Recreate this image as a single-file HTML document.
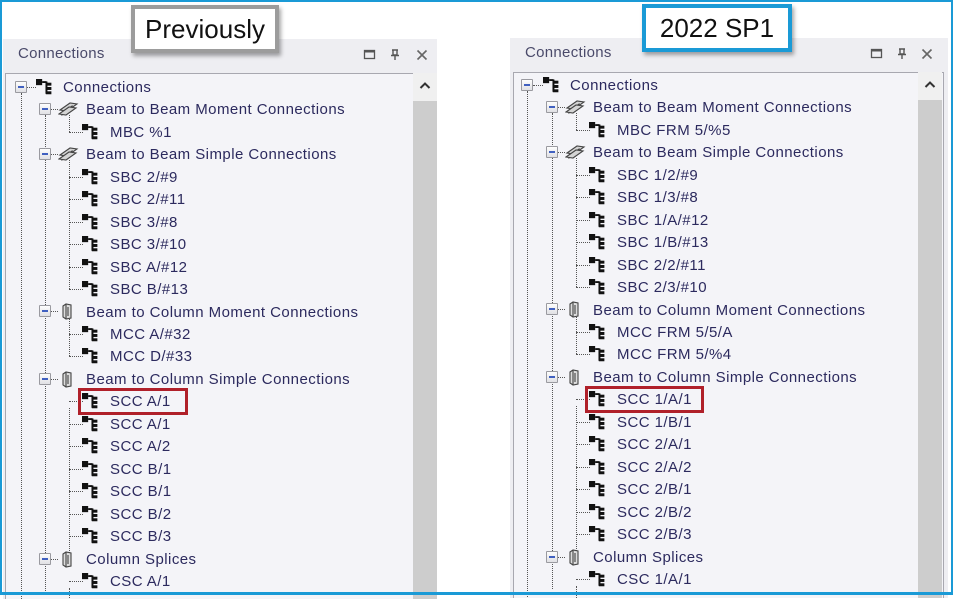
<!DOCTYPE html>
<html><head><meta charset="utf-8"><style>
*{margin:0;padding:0;box-sizing:border-box}
body{width:953px;height:595px;overflow:hidden;background:#fff;position:relative;font-family:"Segoe UI","Liberation Sans",sans-serif}
.frame{position:absolute;left:0;top:0;width:953px;height:595px;border:2px solid #1a9ad6;border-bottom-width:3px;z-index:5;pointer-events:none}
.panel{position:absolute;height:560px;background:#eeeef2;overflow:hidden}
.title{position:absolute;left:15px;top:6px;font-size:15px;letter-spacing:0.3px;color:#4a4a6a}
.hicon{position:absolute;top:10px}
.tree{position:absolute;left:2px;top:34px;bottom:0;border:1px solid #a8a8b0;border-bottom:none;background:#f4f4f8}
.sb{position:absolute;top:34px;bottom:0;width:24px;background:#f0f0f0}
.sb .tr{position:absolute;top:28px;left:0;right:0;bottom:0;background:#cdcdcd}
.row{position:absolute;height:22px;line-height:22px;font-size:15px;letter-spacing:0.45px;color:#2c2a5e;white-space:nowrap;margin-top:1px}
.exp{position:absolute;width:12px;height:12px;border:1px solid #9a9aa0;background:linear-gradient(#fdfdfd,#e0e0e4);border-radius:1px}
.exp:after{content:"";position:absolute;left:2px;top:4px;width:6px;height:1.5px;background:#4060c0}
.vl{position:absolute;width:0;border-left:1px dotted #555}
.hl{position:absolute;height:0;border-top:1px dotted #555}
.ic{position:absolute}
.lab{position:absolute;background:#fff;font-family:"Liberation Sans",sans-serif;font-size:26px;color:#111;text-align:center;line-height:40px;box-shadow:2px 3px 4px rgba(0,0,0,.35);z-index:4}
.red{position:absolute;border:3px solid #b0202a;z-index:3}
</style></head><body>
<svg width="0" height="0" style="position:absolute">
<defs>
<g id="node"><rect x="0" y="0" width="5" height="5" fill="#111"/><path d="M5 2.5H8.5M8.5 2V12" stroke="#111" stroke-width="1.6" fill="none"/><rect x="8" y="3" width="4.5" height="2.4" fill="#111"/><rect x="8" y="6.5" width="4.5" height="2.4" fill="#111"/><rect x="8" y="10" width="4.5" height="2.4" fill="#111"/></g>
<g id="beam" fill="#d4d4d4" stroke="#444" stroke-width="1.1"><path d="M2 9L12 2L19 3L9 10Z"/><path d="M4 12L14 5L14 7L4 14Z"/><path d="M1 13L11 6L18 7L8 14Z"/></g>
<g id="col" fill="#dcdcdc" stroke="#444" stroke-width="1.1"><path d="M2 3L5 1L10 2L10 15L5 16L2 14Z"/><path d="M5 1L5 16"/><path d="M7 4L7 13"/></g>
</defs></svg>
<div class="frame"></div>
<div class="lab" style="left:131px;top:5px;width:148px;height:48px;border:4px solid #9c9c9c;">Previously</div>
<div class="lab" style="left:642px;top:4px;width:150px;height:48px;border:4px solid #1a9ad6;">2022 SP1</div>
<div class="red" style="left:78px;top:388px;width:110px;height:27px"></div>
<div class="red" style="left:585px;top:386px;width:119px;height:27px"></div>

<!-- LEFT PANEL -->
<div class="panel" style="left:3px;top:39px;width:434px">
<div class="title">Connections</div>
<svg class="hicon" style="left:360px" width="14" height="12"><rect x="1.5" y="1.5" width="10" height="8" fill="none" stroke="#555" stroke-width="1.3"/><rect x="1.5" y="1.5" width="10" height="2" fill="#555"/></svg>
<svg class="hicon" style="left:386px" width="12" height="12"><path d="M3 1H9M4 1V6H8V1M2 6.5H10M6 6.5V11" stroke="#555" stroke-width="1.4" fill="none"/></svg>
<svg class="hicon" style="left:413px" width="12" height="12"><path d="M1.5 1.5L10.5 10.5M10.5 1.5L1.5 10.5" stroke="#666" stroke-width="1.6"/></svg>
<div class="tree" style="right:0">
</div>
<div class="sb" style="left:410px"><svg style="position:absolute;left:6px;top:8px" width="12" height="10"><path d="M1.5 7L6 2.5L10.5 7" stroke="#333" stroke-width="2" fill="none"/></svg><div class="tr"></div></div>
<div class="vl" style="left:18px;top:54px;height:520px"></div>
<div class="vl" style="left:42px;top:76px;height:476px"></div>
<div class="vl" style="left:66px;top:76px;height:17px"></div>
<div class="vl" style="left:66px;top:121px;height:129px"></div>
<div class="vl" style="left:66px;top:278px;height:39px"></div>
<div class="vl" style="left:66px;top:369px;height:151px"></div>
<div class="vl" style="left:66px;top:549px;height:20px"></div>
<div class="hl" style="left:24px;top:48px;width:9px"></div>
<div class="exp" style="left:12px;top:42px"></div><svg class="ic" style="left:33px;top:40px" width="16" height="16" viewBox="0 0 13 13"><use href="#node"/></svg>
<div class="row" style="left:60px;top:37px">Connections</div>

<div class="hl" style="left:48px;top:70px;width:7px"></div><div class="exp" style="left:36px;top:64px"></div><svg class="ic" style="left:55px;top:62px" width="21" height="16"><use href="#beam"/></svg><div class="row" style="left:83px;top:59px">Beam to Beam Moment Connections</div>
<div class="hl" style="left:66px;top:93px;width:14px"></div><svg class="ic" style="left:79px;top:85px" width="16" height="16" viewBox="0 0 13 13"><use href="#node"/></svg><div class="row" style="left:107px;top:82px">MBC %1</div>
<div class="hl" style="left:48px;top:115px;width:7px"></div><div class="exp" style="left:36px;top:109px"></div><svg class="ic" style="left:55px;top:107px" width="21" height="16"><use href="#beam"/></svg><div class="row" style="left:83px;top:104px">Beam to Beam Simple Connections</div>
<div class="hl" style="left:66px;top:138px;width:14px"></div><svg class="ic" style="left:79px;top:130px" width="16" height="16" viewBox="0 0 13 13"><use href="#node"/></svg><div class="row" style="left:107px;top:127px">SBC 2/#9</div>
<div class="hl" style="left:66px;top:160px;width:14px"></div><svg class="ic" style="left:79px;top:152px" width="16" height="16" viewBox="0 0 13 13"><use href="#node"/></svg><div class="row" style="left:107px;top:149px">SBC 2/#11</div>
<div class="hl" style="left:66px;top:183px;width:14px"></div><svg class="ic" style="left:79px;top:175px" width="16" height="16" viewBox="0 0 13 13"><use href="#node"/></svg><div class="row" style="left:107px;top:172px">SBC 3/#8</div>
<div class="hl" style="left:66px;top:205px;width:14px"></div><svg class="ic" style="left:79px;top:197px" width="16" height="16" viewBox="0 0 13 13"><use href="#node"/></svg><div class="row" style="left:107px;top:194px">SBC 3/#10</div>
<div class="hl" style="left:66px;top:228px;width:14px"></div><svg class="ic" style="left:79px;top:220px" width="16" height="16" viewBox="0 0 13 13"><use href="#node"/></svg><div class="row" style="left:107px;top:217px">SBC A/#12</div>
<div class="hl" style="left:66px;top:250px;width:14px"></div><svg class="ic" style="left:79px;top:242px" width="16" height="16" viewBox="0 0 13 13"><use href="#node"/></svg><div class="row" style="left:107px;top:239px">SBC B/#13</div>
<div class="hl" style="left:48px;top:272px;width:7px"></div><div class="exp" style="left:36px;top:266px"></div><svg class="ic" style="left:58px;top:264px" width="12" height="17"><use href="#col"/></svg><div class="row" style="left:83px;top:262px">Beam to Column Moment Connections</div>
<div class="hl" style="left:66px;top:295px;width:14px"></div><svg class="ic" style="left:79px;top:287px" width="16" height="16" viewBox="0 0 13 13"><use href="#node"/></svg><div class="row" style="left:107px;top:284px">MCC A/#32</div>
<div class="hl" style="left:66px;top:317px;width:14px"></div><svg class="ic" style="left:79px;top:309px" width="16" height="16" viewBox="0 0 13 13"><use href="#node"/></svg><div class="row" style="left:107px;top:306px">MCC D/#33</div>
<div class="hl" style="left:48px;top:340px;width:7px"></div><div class="exp" style="left:36px;top:334px"></div><svg class="ic" style="left:58px;top:332px" width="12" height="17"><use href="#col"/></svg><div class="row" style="left:83px;top:329px">Beam to Column Simple Connections</div>
<div class="hl" style="left:66px;top:362px;width:14px"></div><svg class="ic" style="left:79px;top:354px" width="16" height="16" viewBox="0 0 13 13"><use href="#node"/></svg><div class="row" style="left:107px;top:351px">SCC A/1</div>
<div class="hl" style="left:66px;top:385px;width:14px"></div><svg class="ic" style="left:79px;top:377px" width="16" height="16" viewBox="0 0 13 13"><use href="#node"/></svg><div class="row" style="left:107px;top:374px">SCC A/1</div>
<div class="hl" style="left:66px;top:407px;width:14px"></div><svg class="ic" style="left:79px;top:399px" width="16" height="16" viewBox="0 0 13 13"><use href="#node"/></svg><div class="row" style="left:107px;top:396px">SCC A/2</div>
<div class="hl" style="left:66px;top:430px;width:14px"></div><svg class="ic" style="left:79px;top:422px" width="16" height="16" viewBox="0 0 13 13"><use href="#node"/></svg><div class="row" style="left:107px;top:419px">SCC B/1</div>
<div class="hl" style="left:66px;top:452px;width:14px"></div><svg class="ic" style="left:79px;top:444px" width="16" height="16" viewBox="0 0 13 13"><use href="#node"/></svg><div class="row" style="left:107px;top:441px">SCC B/1</div>
<div class="hl" style="left:66px;top:475px;width:14px"></div><svg class="ic" style="left:79px;top:467px" width="16" height="16" viewBox="0 0 13 13"><use href="#node"/></svg><div class="row" style="left:107px;top:464px">SCC B/2</div>
<div class="hl" style="left:66px;top:497px;width:14px"></div><svg class="ic" style="left:79px;top:489px" width="16" height="16" viewBox="0 0 13 13"><use href="#node"/></svg><div class="row" style="left:107px;top:486px">SCC B/3</div>
<div class="hl" style="left:48px;top:520px;width:7px"></div><div class="exp" style="left:36px;top:514px"></div><svg class="ic" style="left:58px;top:512px" width="12" height="17"><use href="#col"/></svg><div class="row" style="left:83px;top:509px">Column Splices</div>
<div class="hl" style="left:66px;top:542px;width:14px"></div><svg class="ic" style="left:79px;top:534px" width="16" height="16" viewBox="0 0 13 13"><use href="#node"/></svg><div class="row" style="left:107px;top:531px">CSC A/1</div>
</div>

<!-- RIGHT PANEL -->
<div class="panel" style="left:510px;top:38px;width:438px">
<div class="title">Connections</div>
<svg class="hicon" style="left:360px" width="14" height="12"><rect x="1.5" y="1.5" width="10" height="8" fill="none" stroke="#555" stroke-width="1.3"/><rect x="1.5" y="1.5" width="10" height="2" fill="#555"/></svg>
<svg class="hicon" style="left:386px" width="12" height="12"><path d="M3 1H9M4 1V6H8V1M2 6.5H10M6 6.5V11" stroke="#555" stroke-width="1.4" fill="none"/></svg>
<svg class="hicon" style="left:411px" width="12" height="12"><path d="M1.5 1.5L10.5 10.5M10.5 1.5L1.5 10.5" stroke="#666" stroke-width="1.6"/></svg>
<div class="tree" style="left:3px;right:4px"></div>
<div class="sb" style="left:408px"><svg style="position:absolute;left:6px;top:8px" width="12" height="10"><path d="M1.5 7L6 2.5L10.5 7" stroke="#333" stroke-width="2" fill="none"/></svg><div class="tr"></div></div>
<div class="vl" style="left:17px;top:53px;height:520px"></div>
<div class="vl" style="left:42px;top:75px;height:476px"></div>
<div class="vl" style="left:66px;top:75px;height:17px"></div>
<div class="vl" style="left:66px;top:120px;height:129px"></div>
<div class="vl" style="left:66px;top:277px;height:39px"></div>
<div class="vl" style="left:66px;top:368px;height:151px"></div>
<div class="vl" style="left:66px;top:548px;height:20px"></div>
<div class="hl" style="left:23px;top:47px;width:10px"></div>
<div class="exp" style="left:11px;top:41px"></div><svg class="ic" style="left:33px;top:39px" width="16" height="16" viewBox="0 0 13 13"><use href="#node"/></svg>
<div class="row" style="left:60px;top:36px">Connections</div>

<div class="hl" style="left:48px;top:69px;width:7px"></div><div class="exp" style="left:36px;top:63px"></div><svg class="ic" style="left:55px;top:61px" width="21" height="16"><use href="#beam"/></svg><div class="row" style="left:83px;top:58px">Beam to Beam Moment Connections</div>
<div class="hl" style="left:66px;top:92px;width:14px"></div><svg class="ic" style="left:79px;top:84px" width="16" height="16" viewBox="0 0 13 13"><use href="#node"/></svg><div class="row" style="left:107px;top:81px">MBC FRM 5/%5</div>
<div class="hl" style="left:48px;top:114px;width:7px"></div><div class="exp" style="left:36px;top:108px"></div><svg class="ic" style="left:55px;top:106px" width="21" height="16"><use href="#beam"/></svg><div class="row" style="left:83px;top:103px">Beam to Beam Simple Connections</div>
<div class="hl" style="left:66px;top:137px;width:14px"></div><svg class="ic" style="left:79px;top:129px" width="16" height="16" viewBox="0 0 13 13"><use href="#node"/></svg><div class="row" style="left:107px;top:126px">SBC 1/2/#9</div>
<div class="hl" style="left:66px;top:159px;width:14px"></div><svg class="ic" style="left:79px;top:151px" width="16" height="16" viewBox="0 0 13 13"><use href="#node"/></svg><div class="row" style="left:107px;top:148px">SBC 1/3/#8</div>
<div class="hl" style="left:66px;top:182px;width:14px"></div><svg class="ic" style="left:79px;top:174px" width="16" height="16" viewBox="0 0 13 13"><use href="#node"/></svg><div class="row" style="left:107px;top:171px">SBC 1/A/#12</div>
<div class="hl" style="left:66px;top:204px;width:14px"></div><svg class="ic" style="left:79px;top:196px" width="16" height="16" viewBox="0 0 13 13"><use href="#node"/></svg><div class="row" style="left:107px;top:193px">SBC 1/B/#13</div>
<div class="hl" style="left:66px;top:227px;width:14px"></div><svg class="ic" style="left:79px;top:219px" width="16" height="16" viewBox="0 0 13 13"><use href="#node"/></svg><div class="row" style="left:107px;top:216px">SBC 2/2/#11</div>
<div class="hl" style="left:66px;top:249px;width:14px"></div><svg class="ic" style="left:79px;top:241px" width="16" height="16" viewBox="0 0 13 13"><use href="#node"/></svg><div class="row" style="left:107px;top:238px">SBC 2/3/#10</div>
<div class="hl" style="left:48px;top:271px;width:7px"></div><div class="exp" style="left:36px;top:265px"></div><svg class="ic" style="left:58px;top:263px" width="12" height="17"><use href="#col"/></svg><div class="row" style="left:83px;top:261px">Beam to Column Moment Connections</div>
<div class="hl" style="left:66px;top:294px;width:14px"></div><svg class="ic" style="left:79px;top:286px" width="16" height="16" viewBox="0 0 13 13"><use href="#node"/></svg><div class="row" style="left:107px;top:283px">MCC FRM 5/5/A</div>
<div class="hl" style="left:66px;top:316px;width:14px"></div><svg class="ic" style="left:79px;top:308px" width="16" height="16" viewBox="0 0 13 13"><use href="#node"/></svg><div class="row" style="left:107px;top:305px">MCC FRM 5/%4</div>
<div class="hl" style="left:48px;top:339px;width:7px"></div><div class="exp" style="left:36px;top:333px"></div><svg class="ic" style="left:58px;top:331px" width="12" height="17"><use href="#col"/></svg><div class="row" style="left:83px;top:328px">Beam to Column Simple Connections</div>
<div class="hl" style="left:66px;top:361px;width:14px"></div><svg class="ic" style="left:79px;top:353px" width="16" height="16" viewBox="0 0 13 13"><use href="#node"/></svg><div class="row" style="left:107px;top:350px">SCC 1/A/1</div>
<div class="hl" style="left:66px;top:384px;width:14px"></div><svg class="ic" style="left:79px;top:376px" width="16" height="16" viewBox="0 0 13 13"><use href="#node"/></svg><div class="row" style="left:107px;top:373px">SCC 1/B/1</div>
<div class="hl" style="left:66px;top:406px;width:14px"></div><svg class="ic" style="left:79px;top:398px" width="16" height="16" viewBox="0 0 13 13"><use href="#node"/></svg><div class="row" style="left:107px;top:395px">SCC 2/A/1</div>
<div class="hl" style="left:66px;top:429px;width:14px"></div><svg class="ic" style="left:79px;top:421px" width="16" height="16" viewBox="0 0 13 13"><use href="#node"/></svg><div class="row" style="left:107px;top:418px">SCC 2/A/2</div>
<div class="hl" style="left:66px;top:451px;width:14px"></div><svg class="ic" style="left:79px;top:443px" width="16" height="16" viewBox="0 0 13 13"><use href="#node"/></svg><div class="row" style="left:107px;top:440px">SCC 2/B/1</div>
<div class="hl" style="left:66px;top:474px;width:14px"></div><svg class="ic" style="left:79px;top:466px" width="16" height="16" viewBox="0 0 13 13"><use href="#node"/></svg><div class="row" style="left:107px;top:463px">SCC 2/B/2</div>
<div class="hl" style="left:66px;top:496px;width:14px"></div><svg class="ic" style="left:79px;top:488px" width="16" height="16" viewBox="0 0 13 13"><use href="#node"/></svg><div class="row" style="left:107px;top:485px">SCC 2/B/3</div>
<div class="hl" style="left:48px;top:519px;width:7px"></div><div class="exp" style="left:36px;top:513px"></div><svg class="ic" style="left:58px;top:511px" width="12" height="17"><use href="#col"/></svg><div class="row" style="left:83px;top:508px">Column Splices</div>
<div class="hl" style="left:66px;top:541px;width:14px"></div><svg class="ic" style="left:79px;top:533px" width="16" height="16" viewBox="0 0 13 13"><use href="#node"/></svg><div class="row" style="left:107px;top:530px">CSC 1/A/1</div>
</div>
</body></html>
